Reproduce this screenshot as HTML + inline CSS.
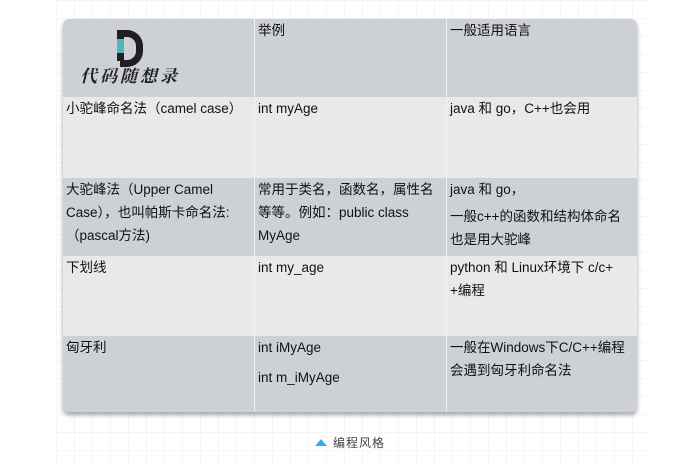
<!DOCTYPE html>
<html><head><meta charset="utf-8"><style>
body{margin:0;width:700px;height:464px;background:#fff;position:relative;overflow:hidden;font-family:"Liberation Sans","Noto Sans CJK SC",sans-serif;}
.grid{position:absolute;left:56px;top:0;width:594px;height:464px;background-image:linear-gradient(#f6f6f6 1px,transparent 1px),linear-gradient(90deg,#f6f6f6 1px,transparent 1px);background-size:18px 18px;}
.tbl{position:absolute;left:63px;top:19px;width:574px;height:393px;border-radius:6px;overflow:hidden;box-shadow:0 3px 5px rgba(0,0,0,.35);}
.row{position:absolute;left:0;width:574px;}
.c{position:absolute;top:0;bottom:0;padding:0 10px 0 3px;font-size:13.5px;line-height:23px;color:#111;box-sizing:border-box;}
.c1{left:0;width:191px}.c2{left:191px;width:192px;border-left:1px solid #f2f3f4}.c3{left:383px;width:191px;border-left:1px solid #f2f3f4}
.d{background:#cdd1d5}.l{background:#e8e9eb}
.cap{position:absolute;left:315px;top:434px;font-size:12px;color:#444;letter-spacing:1px;}
.tri{display:inline-block;width:0;height:0;border-left:6px solid transparent;border-right:6px solid transparent;border-bottom:7px solid #3aa8f0;margin-right:6px;vertical-align:1px}
</style></head><body>
<div class="grid"></div>
<div class="tbl">
<div class="row d" style="top:0;height:78px">
 <div class="c c1">
  <div style="position:absolute;left:54px;top:11px;width:26px;height:31px;">
   <div style="position:absolute;left:0;top:0;width:7px;height:31px;background:#231f20"></div>
   <div style="position:absolute;left:0;top:9px;width:7px;height:14px;background:#4fb8b4"></div>
   <div style="position:absolute;left:3px;top:0;width:16px;height:23px;border:7px solid #231f20;border-left:none;border-radius:0 16px 16px 0;"></div>
  </div>
  <div style="position:absolute;left:17px;top:44px;font-family:'Noto Serif CJK SC',serif;font-size:17px;font-weight:bold;letter-spacing:3px;font-style:italic;color:#222">代码随想录</div>
 </div>
 <div class="c c2">举例</div><div class="c c3">一般适用语言</div>
</div>
<div class="row l" style="top:78px;height:81px">
 <div class="c c1">小驼峰命名法（camel case）</div><div class="c c2">int myAge</div><div class="c c3">java 和 go，C++也会用</div>
</div>
<div class="row d" style="top:159px;height:78px">
 <div class="c c1">大驼峰法（Upper Camel Case），也叫帕斯卡命名法:（pascal方法)</div><div class="c c2" style="padding-right:4px">常用于类名，函数名，属性名等等。例如：public class MyAge</div><div class="c c3" style="padding-right:6px">java 和 go，<div style="margin-top:4px">一般c++的函数和结构体命名也是用大驼峰</div></div>
</div>
<div class="row l" style="top:237px;height:80px">
 <div class="c c1">下划线</div><div class="c c2">int my_age</div><div class="c c3">python 和 Linux环境下 c/c+<br>+编程</div>
</div>
<div class="row d" style="top:317px;height:76px">
 <div class="c c1">匈牙利</div><div class="c c2">int iMyAge<div style="margin-top:7px">int m_iMyAge</div></div><div class="c c3">一般在Windows下C/C++编程会遇到匈牙利命名法</div>
</div>
</div>
<div class="cap"><span class="tri"></span>编程风格</div>
</body></html>
